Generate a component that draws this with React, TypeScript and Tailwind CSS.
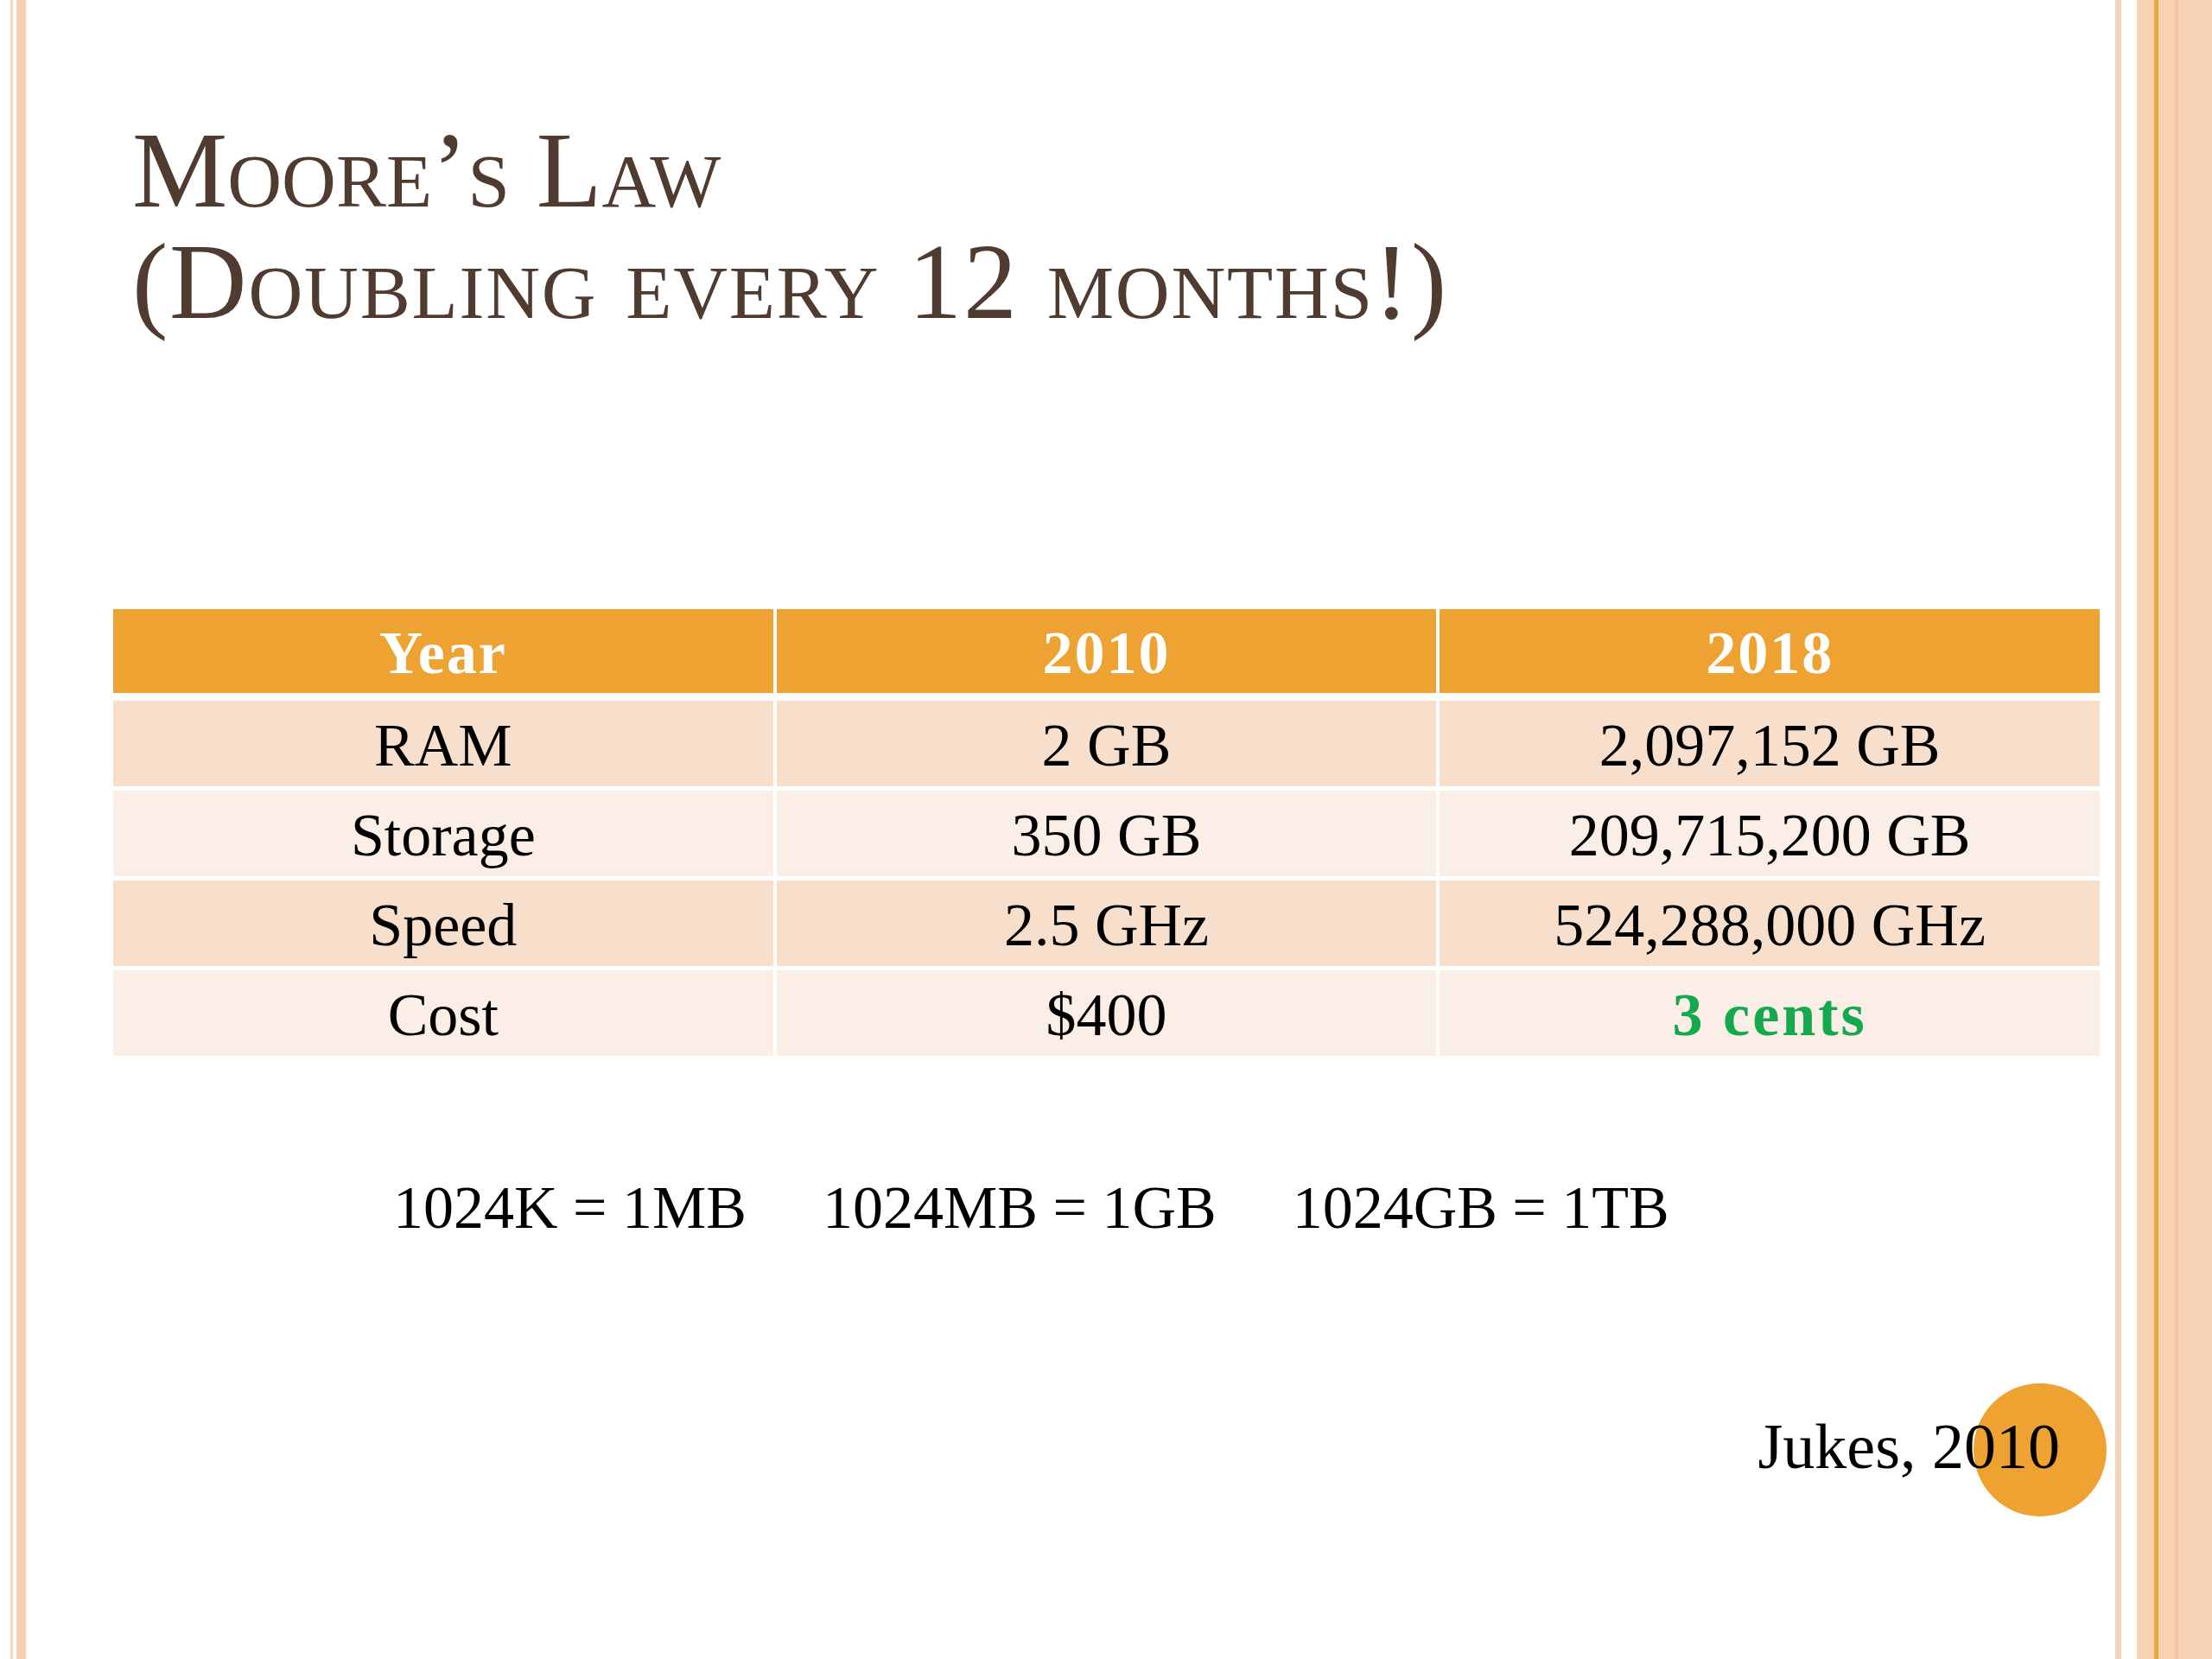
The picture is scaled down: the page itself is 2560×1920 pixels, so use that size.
import React from 'react'

const rows = [
  { label: 'RAM', a: '2 GB', b: '2,097,152 GB' },
  { label: 'Storage', a: '350 GB', b: '209,715,200 GB' },
  { label: 'Speed', a: '2.5 GHz', b: '524,288,000 GHz' },
  { label: 'Cost', a: '$400', b: '3 cents', highlight: true },
]

const serif = { fontFamily: '"Liberation Serif", "Times New Roman", serif' }

function Cell({ children, className = '' }: { children: React.ReactNode; className?: string }) {
  return (
    <div className={`flex h-full items-center justify-center pt-[4px] leading-none ${className}`}>
      {children}
    </div>
  )
}

export default function App() {
  return (
    <div className="flex h-[1920px] w-[2560px] overflow-hidden bg-white text-black" style={serif}>
      {/* left edge stripes */}
      <div className="flex h-full w-[30px] shrink-0">
        <div className="w-[12px]" />
        <div className="w-[3px] bg-[#f8d8bc]" />
        <div className="w-[4px]" />
        <div className="w-[11px] bg-[#f6cfae]" />
      </div>

      <main className="flex h-full flex-1 flex-col">
        <h1 className="ml-[123px] mt-[133px] text-[124px] leading-[129px] font-normal text-[#4f3b2f] [font-variant:small-caps]">
          Moore’s Law
          <br />
          <span className="tracking-[1.8px]">(Doubling every 12 months!)</span>
        </h1>

        <div className="ml-[101px] mt-[314px] flex w-[2299px] flex-col text-[70px]">
          <div className="grid h-[97px] grid-cols-3 gap-x-[4px] font-bold tracking-[2px] text-white">
            <Cell className="bg-[#eea231]">Year</Cell>
            <Cell className="bg-[#eea231]">2010</Cell>
            <Cell className="bg-[#eea231]">2018</Cell>
          </div>
          <div className="mt-[9px] flex flex-col gap-y-[5px]">
            {rows.map((r, i) => {
              const bg = i % 2 === 0 ? 'bg-[#f7dfcc]' : 'bg-[#fbeee6]'
              return (
                <div key={r.label} className="grid h-[99px] grid-cols-3 gap-x-[4px]">
                  <Cell className={bg}>{r.label}</Cell>
                  <Cell className={bg}>{r.a}</Cell>
                  <Cell className={`${bg} ${r.highlight ? 'font-bold tracking-[3px] text-[#14a94c]' : ''}`}>{r.b}</Cell>
                </div>
              )
            })}
          </div>
        </div>

        <div className="ml-[425px] mt-[141px] flex gap-x-[88px] text-[70px] leading-none">
          <span>1024K = 1MB</span>
          <span>1024MB = 1GB</span>
          <span>1024GB = 1TB</span>
        </div>

        <div className="relative mt-[204px] flex justify-end pr-[64px]">
          <div className="absolute right-[10px] top-[-36px] h-[154px] w-[154px] rounded-full bg-[#eea231]" />
          <span className="relative text-[74px] leading-none">Jukes, 2010</span>
        </div>
      </main>

      {/* right edge stripes */}
      <div className="flex h-full w-[112px] shrink-0">
        <div className="w-[7px] bg-[#f2d5bd]" />
        <div className="w-[18px]" />
        <div className="w-[20px] bg-[#f7d2b4]" />
        <div className="w-[5px] bg-[#eba640]" />
        <div className="w-[19px] bg-[#f7d2b4]" />
        <div className="w-[4px] bg-[#f0c8a4]" />
        <div className="flex-1 bg-[#f7d2b4]" />
      </div>
    </div>
  )
}
